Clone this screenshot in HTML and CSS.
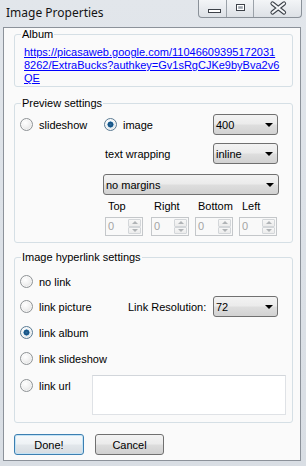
FILE: index.html
```html
<!DOCTYPE html>
<html>
<head>
<meta charset="utf-8">
<title>Image Properties</title>
<link rel="stylesheet" href="styles.css">
</head>
<body>
<div class="window">
  <div class="titlebar">
    <span class="title">Image Properties</span>
    <div class="caption-buttons">
      <div class="cbtn min">
        <svg width="27" height="17" viewBox="0 0 27 17"><rect x="9.5" y="9.5" width="12" height="3" fill="#fff" stroke="#3d4249"/></svg>
      </div>
      <div class="cbtn max">
        <svg width="26" height="17" viewBox="0 0 26 17"><rect x="9.5" y="4.5" width="8" height="6" fill="#c9ced4" stroke="#3d4249"/><rect x="10.5" y="5.5" width="6" height="4" fill="none" stroke="#fff"/><rect x="11.5" y="6.5" width="4" height="2" fill="#9aa0a8" stroke="none"/></svg>
      </div>
      <div class="cbtn close">
        <svg width="46" height="17" viewBox="0 0 46 17"><path d="M18.5 3.5 L30 12.5 M30 3.5 L18.5 12.5" stroke="#3d4249" stroke-width="4.2" stroke-linecap="round"/><path d="M18.5 3.5 L30 12.5 M30 3.5 L18.5 12.5" stroke="#f4f6f8" stroke-width="2.2" stroke-linecap="round"/></svg>
      </div>
    </div>
  </div>
  <div class="client">
    <fieldset class="group album">
      <legend>Album</legend>
      <a class="album-link" href="#">https://picasaweb.google.com/11046609395172031<br>8262/ExtraBucks?authkey=Gv1sRgCJKe9byBva2v6<br>QE</a>
    </fieldset>

    <fieldset class="group preview">
      <legend>Preview settings</legend>
      <div class="pbody">
        <div class="row">
          <label class="radio w-slideshow"><span class="dot"></span>slideshow</label>
          <label class="radio w-image"><span class="dot checked"></span>image</label>
          <div class="combo small"><span>400</span><span class="arrow"></span></div>
        </div>
        <div class="row row-wrap">
          <span class="wrap-label">text wrapping</span>
          <div class="combo small"><span>inline</span><span class="arrow"></span></div>
        </div>
        <div class="row row-margins">
          <div class="combo wide"><span>no margins</span><span class="arrow"></span></div>
        </div>
        <div class="spin-grid">
          <span class="spin-label">Top</span>
          <span class="spin-label">Right</span>
          <span class="spin-label">Bottom</span>
          <span class="spin-label">Left</span>
          <div class="spin"><span class="val">0</span><span class="btns"><span class="b"><span class="up"></span></span><span class="b"><span class="down"></span></span></span></div>
          <div class="spin"><span class="val">0</span><span class="btns"><span class="b"><span class="up"></span></span><span class="b"><span class="down"></span></span></span></div>
          <div class="spin"><span class="val">0</span><span class="btns"><span class="b"><span class="up"></span></span><span class="b"><span class="down"></span></span></span></div>
          <div class="spin"><span class="val">0</span><span class="btns"><span class="b"><span class="up"></span></span><span class="b"><span class="down"></span></span></span></div>
        </div>
      </div>
    </fieldset>

    <fieldset class="group hyperlink">
      <legend>Image hyperlink settings</legend>
      <div class="hbody">
        <div class="row">
          <label class="radio"><span class="dot"></span>no link</label>
        </div>
        <div class="row r2">
          <label class="radio w-picture"><span class="dot"></span>link picture</label>
          <span class="res-label">Link Resolution:</span>
          <div class="combo small"><span>72</span><span class="arrow"></span></div>
        </div>
        <div class="row r3">
          <label class="radio"><span class="dot checked"></span>link album</label>
        </div>
        <div class="row r4">
          <label class="radio"><span class="dot"></span>link slideshow</label>
        </div>
        <div class="row r5">
          <label class="radio w-url"><span class="dot"></span>link url</label>
          <div class="urlbox"></div>
        </div>
      </div>
    </fieldset>

    <div class="buttons">
      <button class="btn default">Done!</button>
      <button class="btn cancel">Cancel</button>
    </div>
  </div>
</div>
</body>
</html>
```

FILE: styles.css
```css
* { box-sizing: border-box; }
html, body { margin: 0; padding: 0; }
body {
  width: 306px;
  height: 466px;
  overflow: hidden;
  background: linear-gradient(180deg, #e2e6eb 0%, #dde2e8 40%, #d9dee4 100%);
  font-family: "Liberation Sans", Arial, sans-serif;
  font-size: 11px;
  color: #000;
}
.window {
  width: 306px;
  height: 466px;
  display: flex;
  flex-direction: column;
}
.titlebar {
  height: 27px;
  flex: none;
  display: flex;
  justify-content: space-between;
  align-items: flex-start;
  padding-left: 6px;
}
.title {
  font-family: "Noto Sans", "Open Sans", sans-serif;
  font-size: 12px;
  line-height: 16px;
  margin-top: 5px;
  color: #141414;
}
.caption-buttons {
  display: flex;
  height: 18px;
  margin-right: 4px;
  border: 1px solid #8a9199;
  border-top: none;
  border-radius: 0 0 4px 4px;
  background: linear-gradient(180deg, #f3f5f7 0%, #e6e9ed 60%, #dde1e6 100%);
  overflow: hidden;
}
.cbtn { height: 17px; display: flex; }
.cbtn svg { display: block; }
.cbtn.min { width: 28px; border-right: 1px solid #9ba2a9; }
.cbtn.max { width: 27px; border-right: 1px solid #9ba2a9; }
.cbtn.close { width: 47px; }

.client {
  flex: 1;
  margin: 0 5px 5px 3px;
  border: 1px solid #8c929a;
  background: #fafafa;
  padding: 0 7px 0 10px;
  display: flex;
  flex-direction: column;
}

.group {
  margin: 0;
  padding: 0;
  border: 1px solid #d5dfe5;
  border-radius: 3px;
  min-inline-size: 0;
}
.group legend {
  margin-left: 6px;
  padding: 0 1px;
  font-size: 11px;
  line-height: 13px;
}
.album { padding-bottom: 1px; }
.album-link {
  display: block;
  padding: 5px 0 0 9px;
  line-height: 13px;
  color: #0000ff;
  text-decoration: underline;
}

.preview { margin-top: 10px; }
.pbody { padding: 4px 0 6px 5px; }
.row { display: flex; align-items: center; height: 21px; }
.radio { display: flex; align-items: center; gap: 6px; white-space: nowrap; }
.w-slideshow { width: 84px; }
.w-image { width: 109px; }
.dot {
  width: 13px;
  height: 13px;
  flex: none;
  border-radius: 50%;
  border: 1px solid #8f9396;
  background: radial-gradient(circle at 40% 35%, #ffffff 0%, #f1f1f1 45%, #d6d6d6 100%);
  box-shadow: inset 0 0 0 1px rgba(255,255,255,0.6);
  position: relative;
}
.dot.checked {
  background:
    radial-gradient(circle at 50% 50%, #2c6fa3 0%, #174f7e 28%, #4f93c4 38%, transparent 42%),
    radial-gradient(circle at 40% 35%, #ffffff 0%, #eef1f3 45%, #cfd4d8 100%);
  border-color: #5b7b93;
}
.combo {
  height: 21px;
  border: 1px solid #707070;
  border-radius: 3px;
  background: linear-gradient(180deg, #f3f3f3 0%, #ebebeb 48%, #dedede 52%, #d2d2d2 100%);
  display: flex;
  align-items: center;
  justify-content: space-between;
  padding: 0 4px 0 2px;
  flex: none;
}
.combo.small { width: 65px; }
.combo.wide { width: 176px; }
.arrow {
  width: 0;
  height: 0;
  border-left: 4px solid transparent;
  border-right: 4px solid transparent;
  border-top: 4px solid #000;
}
.row-wrap { margin-top: 8px; padding-left: 85px; }
.wrap-label { width: 108px; }
.row-margins { margin-top: 10px; padding-left: 83px; }

.spin-grid {
  margin-top: 5px;
  margin-left: 85px;
  display: grid;
  grid-template-columns: 46px 44px 44px 38px;
  grid-template-rows: 13px 19px;
  row-gap: 4px;
}
.spin-label { line-height: 13px; padding-left: 3px; }
.spin {
  width: 38px;
  height: 19px;
  border: 1px solid #c4c7ca;
  background: #f9f9f9;
  display: flex;
}
.spin .val { flex: 1; padding-left: 2px; line-height: 17px; color: #a4a4a4; }
.spin .btns { width: 13px; margin: 1px 1px 1px 0; display: flex; flex-direction: column; }
.spin .b {
  flex: 1;
  border: 1px solid #d3d6d9;
  border-radius: 1px;
  background: linear-gradient(180deg, #f7f7f7, #ececec);
  display: flex;
  align-items: center;
  justify-content: center;
}
.up { width: 0; height: 0; border-left: 3px solid transparent; border-right: 3px solid transparent; border-bottom: 3px solid #b0b3b6; }
.down { width: 0; height: 0; border-left: 3px solid transparent; border-right: 3px solid transparent; border-top: 3px solid #b0b3b6; }

.hyperlink { margin-top: 8px; }
.hbody { padding: 7px 0 7px 5px; }
.r2 { margin-top: 4px; }
.r3 { margin-top: 5px; }
.r4 { margin-top: 5px; }
.r5 { margin-top: 6px; height: 40px; align-items: flex-start; }
.r5 .radio { height: 21px; }
.w-picture { width: 108px; }
.res-label { width: 85px; }
.w-url { width: 72px; }
.urlbox {
  width: 194px;
  height: 40px;
  background: #ffffff;
  border: 1px solid #dfe2e6;
  border-top-color: #d2d6db;
}

.buttons { margin-top: 11px; display: flex; gap: 11px; }
.btn {
  height: 21px;
  font-family: "Liberation Sans", Arial, sans-serif;
  font-size: 11px;
  color: #000;
  border-radius: 3px;
  padding: 0;
  background: linear-gradient(180deg, #f3f3f3 0%, #ebebeb 48%, #dddddd 52%, #d0d0d0 100%);
}
.btn.default {
  width: 70px;
  border: 1px solid #3c7fb1;
  box-shadow: inset 0 0 0 1px #c4e3f5;
  background: linear-gradient(180deg, #f6f9fb 0%, #eef2f5 48%, #e2e7eb 52%, #d6dce1 100%);
}
.btn.cancel {
  width: 69px;
  border: 1px solid #707070;
}
```
